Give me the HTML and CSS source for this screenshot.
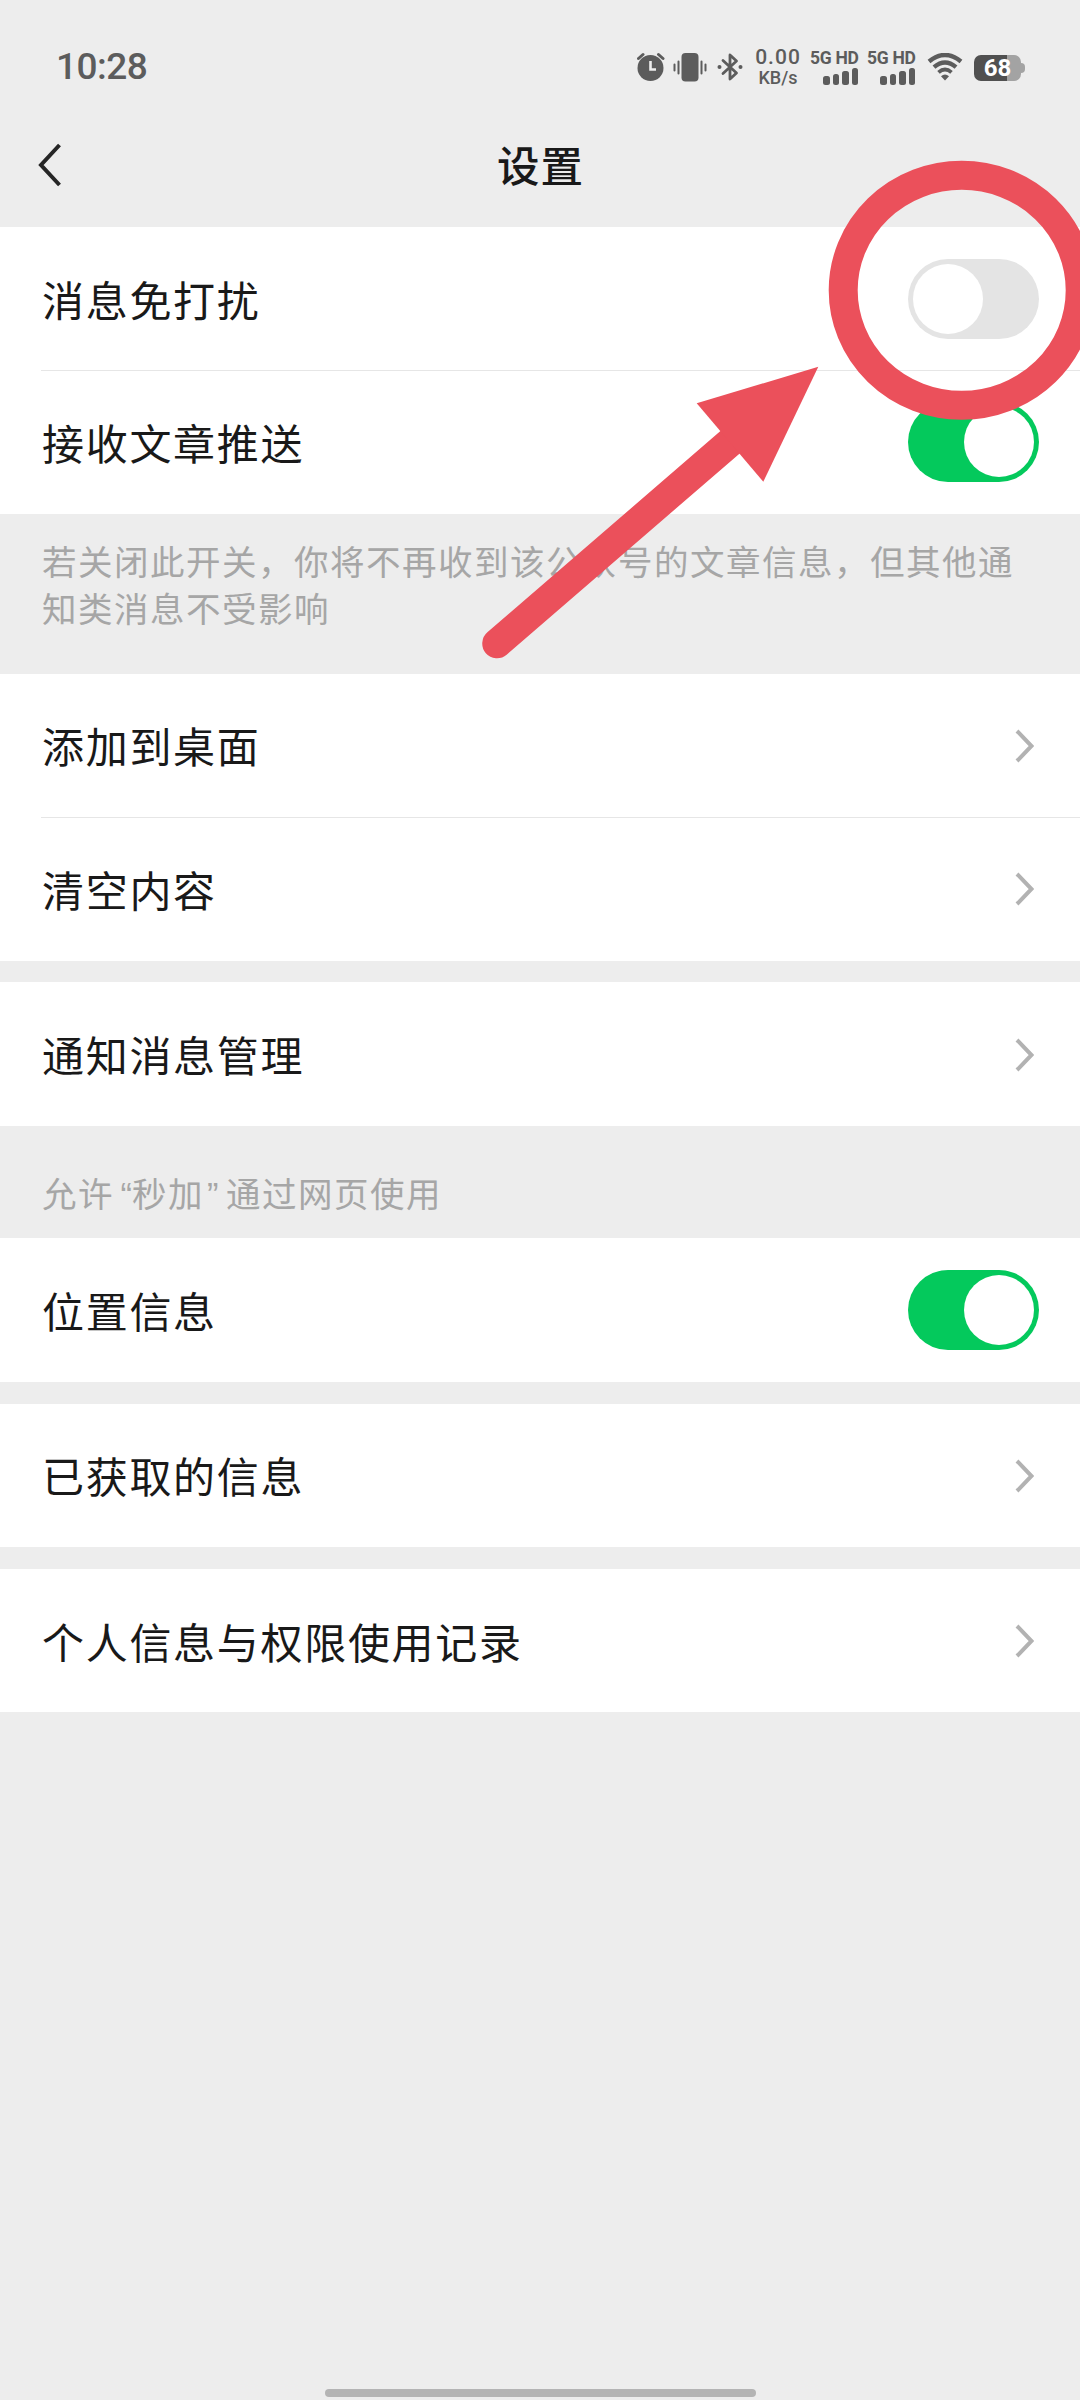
FILE: index.html
```
<!DOCTYPE html>
<html lang="zh-CN">
	<head>
		<meta charset="utf-8">
		<title>设置</title>
		<link rel="stylesheet" href="styles.css">
	</head>

	<body>
		<div class="page">
			<div class="statusbar">
				<div class="time">10:28</div>
				<div class="status">
					<svg class="alarm" width="28" height="30" viewBox="0 0 28 30">
						<circle cx="13.5" cy="16" r="13" fill="#5c5c5c"/>
						<path d="M1.5 6.5L6 2.5M21.5 2.5L26 6.5" stroke="#5c5c5c" stroke-width="3" stroke-linecap="round"/>
						<path d="M13.5 9V17.5H19" fill="none" stroke="#ededed" stroke-width="2.6"/>
					</svg>
					<svg class="vibrate" width="34" height="30" viewBox="0 0 34 30">
						<rect x="8.5" y="1" width="17" height="28.5" rx="4" fill="#5c5c5c"/>
						<path d="M1.5 12.5V18.5M5.5 9.5V21.5M28.5 9.5V21.5M32.5 12.5V18.5" stroke="#5c5c5c" stroke-width="2" stroke-linecap="round"/>
					</svg>
					<svg class="bluetooth" width="26" height="30" viewBox="0 0 26 30">
						<path d="M6 8.5L19.5 21L13 27V3L19.5 9L6 21.5" fill="none" stroke="#5c5c5c" stroke-width="2.8" stroke-linejoin="round" stroke-linecap="round"/>
						<circle cx="2.5" cy="15" r="2" fill="#5c5c5c"/>
						<circle cx="23.5" cy="15" r="2" fill="#5c5c5c"/>
					</svg>
					<div class="speed">
						<div class="num">0.00</div>
						<div class="unit">KB/s</div>
					</div>
					<div class="signal">
						<div class="net">5G HD</div>
						<div class="bars"><i class="b1"></i><i class="b2"></i><i class="b3"></i><i class="b4"></i></div>
					</div>
					<div class="signal">
						<div class="net">5G HD</div>
						<div class="bars"><i class="b1"></i><i class="b2"></i><i class="b3"></i><i class="b4"></i></div>
					</div>
					<svg class="wifi" width="36" height="28" viewBox="0 0 36 28">
						<path d="M2 8.5Q18 -4.5 34 8.5" fill="none" stroke="#5c5c5c" stroke-width="4.4"/>
						<path d="M7 14.2Q18 4.8 29 14.2" fill="none" stroke="#5c5c5c" stroke-width="4.4"/>
						<path d="M11.5 19.3Q18 13.5 24.5 19.3" fill="none" stroke="#5c5c5c" stroke-width="3.8"/>
						<path d="M14 23.2Q18 20 22 23.2L18 27.5Z" fill="#5c5c5c"/>
					</svg>
					<div class="battery"><span>68</span></div>
				</div>
			</div>

			<div class="navbar">
				<svg class="back" width="24" height="44" viewBox="0 0 24 44">
					<path d="M21.5 2L3 22L21.5 42" fill="none" stroke="#262626" stroke-width="4"/>
				</svg>
				<div class="title">设置</div>
			</div>

			<div class="group first">
				<div class="row">
					<div class="label">消息免打扰</div>
					<div class="switch"></div>
				</div>
				<div class="row">
					<div class="label">接收文章推送</div>
					<div class="switch on"></div>
				</div>
			</div>

			<div class="note">若关闭此开关，你将不再收到该公众号的文章信息，但其他通<br>知类消息不受影响</div>

			<div class="group">
				<div class="row">
					<div class="label">添加到桌面</div>
					<svg class="arrow" width="20" height="36" viewBox="0 0 20 36"><path d="M3 3L17.5 18L3 33"/></svg>
				</div>
				<div class="row">
					<div class="label">清空内容</div>
					<svg class="arrow" width="20" height="36" viewBox="0 0 20 36"><path d="M3 3L17.5 18L3 33"/></svg>
				</div>
			</div>

			<div class="group gap">
				<div class="row">
					<div class="label">通知消息管理</div>
					<svg class="arrow" width="20" height="36" viewBox="0 0 20 36"><path d="M3 3L17.5 18L3 33"/></svg>
				</div>
			</div>

			<div class="note web">允许<span class="ql">“</span>秒加<span class="qr">”</span>通过网页使用</div>

			<div class="group">
				<div class="row">
					<div class="label">位置信息</div>
					<div class="switch on"></div>
				</div>
			</div>

			<div class="group gap">
				<div class="row">
					<div class="label">已获取的信息</div>
					<svg class="arrow" width="20" height="36" viewBox="0 0 20 36"><path d="M3 3L17.5 18L3 33"/></svg>
				</div>
			</div>

			<div class="group gap">
				<div class="row">
					<div class="label">个人信息与权限使用记录</div>
					<svg class="arrow" width="20" height="36" viewBox="0 0 20 36"><path d="M3 3L17.5 18L3 33"/></svg>
				</div>
			</div>

			<div class="homebar"></div>

			<!-- red circle and arrow on top of the page -->
			<svg class="mark" width="1080" height="700" viewBox="0 0 1080 700">
				<ellipse cx="961.7" cy="290.3" rx="118.5" ry="115" fill="none" stroke="#eb505b" stroke-width="29"/>
				<path d="M497 643.5L735 438" stroke="#eb505b" stroke-width="29.5" stroke-linecap="round"/>
				<path d="M818.3 366.7L696.7 403.3L763.3 481.7Z" fill="#eb505b"/>
			</svg>
		</div>
	</body>
</html>
```
FILE: styles.css
```
body{
	margin:0;
	background-color:#ededed;
	font-family:"Noto Sans CJK SC", sans-serif;
	color:#191919;
}
.page{
	position:relative;
	width:1080px;
	height:2400px;
	overflow:hidden;
	display:flex;
	flex-direction:column;
}
.statusbar{
	height:104px;
	padding:30px 55px 0 56px;
	box-sizing:border-box;
	display:flex;
	justify-content:space-between;
	align-items:center;
	font-family:Roboto, sans-serif;
	color:#5c5c5c;
}
.time{
	font-size:37px;
	font-weight:500;
	line-height:40px;
	letter-spacing:-0.5px;
}
.status{
	display:flex;
	align-items:center;
}
.vibrate{
	margin-left:8px;
}
.bluetooth{
	margin-left:10px;
}
.speed{
	width:46px;
	margin-left:12px;
	text-align:center;
	font-weight:500;
	white-space:nowrap;
}
.num{
	font-size:21px;
	line-height:21px;
	letter-spacing:1px;
}
.unit{
	font-size:18px;
	line-height:19px;
}
.signal{
	width:49px;
	margin-left:8px;
}
.speed + .signal{
	margin-left:9px;
}
.net{
	font-size:17.5px;
	font-weight:700;
	line-height:16px;
	letter-spacing:-0.3px;
	white-space:nowrap;
}
.bars{
	display:flex;
	justify-content:flex-end;
	align-items:flex-end;
	gap:3px;
	height:17px;
	margin-top:2px;
	padding-right:1px;
}
.bars i{
	width:6.5px;
	border-radius:2.5px;
	background-color:#5c5c5c;
}
.bars .b1{
	height:9px;
}
.bars .b2{
	height:11px;
}
.bars .b3{
	height:14px;
}
.bars .b4{
	height:16.5px;
}
.wifi{
	margin-left:11px;
}
.battery{
	position:relative;
	width:47px;
	height:26px;
	margin:1px 4px 0 11px;
	border-radius:7px;
	background:linear-gradient(to right, #505050 33px, #a3a3a3 33px);
	color:#fff;
	font-size:24px;
	font-weight:700;
	line-height:27px;
	text-align:center;
}
.battery:after{
	content:"";
	position:absolute;
	left:47px;
	top:8px;
	width:4px;
	height:10px;
	border-radius:0 4px 4px 0;
	background-color:#a3a3a3;
}
.navbar{
	height:122.7px;
	box-sizing:border-box;
	padding:0 38px;
	display:grid;
	grid-template-columns:24px 1fr 24px;
	align-items:center;
}
.title{
	font-size:42.5px;
	font-weight:500;
	letter-spacing:1px;
	text-align:center;
	padding:0 0 3px 1px;
}
.group{
	background-color:#fff;
}
.gap{
	margin-top:21.7px;
}
.row{
	height:143.5px;
	box-sizing:border-box;
	padding:0 41px 0 42px;
	display:flex;
	justify-content:space-between;
	align-items:center;
	position:relative;
}
.first .row{
	padding-top:1px;
}
.row + .row:before{
	content:"";
	position:absolute;
	left:41px;
	right:0;
	top:0;
	height:1px;
	background-color:#e6e6e6;
}
.label{
	font-size:42px;
	letter-spacing:1.7px;
	line-height:60px;
}
.arrow{
	margin:1px 5px 0 0;
}
.arrow path{
	fill:none;
	stroke:#b2b2b2;
	stroke-width:4;
}
.switch{
	width:131px;
	height:80px;
	box-sizing:border-box;
	padding:5px;
	border-radius:40px;
	background-color:#e4e4e4;
	display:flex;
}
.switch:before{
	content:"";
	width:70px;
	height:70px;
	border-radius:50%;
	background-color:#fff;
}
.on{
	background-color:#04c95c;
	justify-content:flex-end;
}
.note{
	height:160px;
	box-sizing:border-box;
	padding:23px 42px 0;
	font-size:34.5px;
	letter-spacing:1.5px;
	line-height:47.3px;
	color:#a6a6a6;
	white-space:nowrap;
}
.web{
	height:112.5px;
	padding-top:43px;
}
.ql, .qr{
	display:inline-block;
	width:18px;
	font-family:"Liberation Sans", sans-serif;
	letter-spacing:0;
	line-height:40px;
}
.ql{
	text-align:right;
}
.qr{
	width:19px;
	padding-left:3px;
}
.homebar{
	width:431px;
	height:8px;
	margin:auto auto 3px;
	border-radius:4px;
	background-color:#b4b4b4;
}
.mark{
	position:absolute;
	left:0;
	top:0;
}
```
